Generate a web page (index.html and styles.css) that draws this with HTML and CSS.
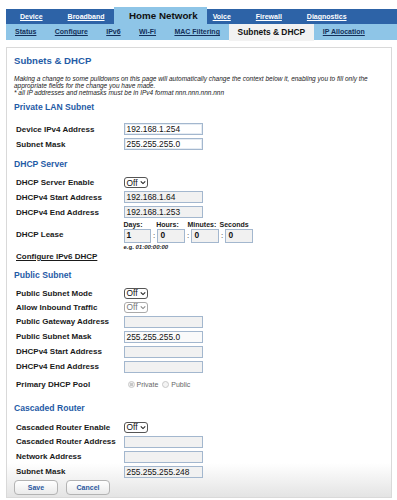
FILE: index.html
```html
<!DOCTYPE html>
<html>
<head>
<meta charset="utf-8">
<link rel="stylesheet" href="styles.css">
</head>
<body>
<nav class="topnav">
  <a class="tab">Device</a>
  <a class="tab">Broadband</a>
  <span class="tab active">Home Network</span>
  <a class="tab">Voice</a>
  <a class="tab">Firewall</a>
  <a class="tab">Diagnostics</a>
</nav>
<nav class="subnav">
  <a class="sub">Status</a>
  <a class="sub">Configure</a>
  <a class="sub">IPv6</a>
  <a class="sub">Wi-Fi</a>
  <a class="sub">MAC Filtering</a>
  <span class="sub active">Subnets &amp; DHCP</span>
  <a class="sub">IP Allocation</a>
</nav>
<main class="box">
  <h1 class="title">Subnets &amp; DHCP</h1>
  <p class="desc">Making a change to some pulldowns on this page will automatically change the context below it, enabling you to fill only the appropriate fields for the change you have made.<br>* all IP addresses and netmasks must be in IPv4 format nnn.nnn.nnn.nnn</p>

  <h2 class="sec sec-lan">Private LAN Subnet</h2>
  <div class="rows rows-lan">
    <div class="row"><span class="lbl">Device IPv4 Address</span><span class="inp">192.168.1.254</span></div>
    <div class="row"><span class="lbl">Subnet Mask</span><span class="inp">255.255.255.0</span></div>
  </div>

  <h2 class="sec sec-dhcp">DHCP Server</h2>
  <div class="rows rows-dhcp">
    <div class="row srow"><span class="lbl">DHCP Server Enable</span><span class="sel">Off<svg viewBox="0 0 8 6" class="chev"><path d="M1 1.5 L4 4.5 L7 1.5" /></svg></span></div>
    <div class="row"><span class="lbl">DHCPv4 Start Address</span><span class="inp grey">192.168.1.64</span></div>
    <div class="row"><span class="lbl">DHCPv4 End Address</span><span class="inp grey">192.168.1.253</span></div>
  </div>
  <div class="lease">
    <span class="lbl">DHCP Lease</span>
    <div class="lease-body">
      <div class="caps">
        <span class="cap c1">Days:</span><span class="cap c2">Hours:</span><span class="cap c3">Minutes:</span><span class="cap">Seconds</span>
      </div>
      <div class="lease-inputs">
        <span class="inp grey small">1</span><span class="colon">:</span><span class="inp grey small">0</span><span class="colon">:</span><span class="inp grey small">0</span><span class="colon">:</span><span class="inp grey small">0</span>
      </div>
      <span class="eg">e.g. <i>01:00:00:00</i></span>
    </div>
  </div>
  <a class="link">Configure IPv6 DHCP</a>

  <h2 class="sec sec-pub">Public Subnet</h2>
  <div class="rows rows-pub">
    <div class="row srow"><span class="lbl">Public Subnet Mode</span><span class="sel">Off<svg viewBox="0 0 8 6" class="chev"><path d="M1 1.5 L4 4.5 L7 1.5" /></svg></span></div>
    <div class="row srow"><span class="lbl">Allow Inbound Traffic</span><span class="sel disabled">Off<svg viewBox="0 0 8 6" class="chev"><path d="M1 1.5 L4 4.5 L7 1.5" /></svg></span></div>
    <div class="row"><span class="lbl">Public Gateway Address</span><span class="inp grey"></span></div>
    <div class="row"><span class="lbl">Public Subnet Mask</span><span class="inp light">255.255.255.0</span></div>
    <div class="row"><span class="lbl">DHCPv4 Start Address</span><span class="inp grey"></span></div>
    <div class="row"><span class="lbl">DHCPv4 End Address</span><span class="inp grey"></span></div>
    <div class="row pool"><span class="lbl">Primary DHCP Pool</span><span class="radios"><span class="radio checked"></span><span class="rtxt">Private</span><span class="radio"></span><span class="rtxt">Public</span></span></div>
  </div>

  <h2 class="sec sec-cas">Cascaded Router</h2>
  <div class="rows rows-cas">
    <div class="row srow"><span class="lbl">Cascaded Router Enable</span><span class="sel">Off<svg viewBox="0 0 8 6" class="chev"><path d="M1 1.5 L4 4.5 L7 1.5" /></svg></span></div>
    <div class="row"><span class="lbl">Cascaded Router Address</span><span class="inp grey"></span></div>
    <div class="row"><span class="lbl">Network Address</span><span class="inp grey"></span></div>
    <div class="row"><span class="lbl">Subnet Mask</span><span class="inp grey">255.255.255.248</span></div>
  </div>
  <div class="buttons">
    <button class="btn">Save</button>
    <button class="btn">Cancel</button>
  </div>
</main>
</body>
</html>
```

FILE: styles.css
```css
* { box-sizing: border-box; }
html, body { margin: 0; padding: 0; background: #fff; }
body {
  font-family: "Liberation Sans", Arial, sans-serif;
  color: #1a1a1a;
  width: 397px;
  overflow: hidden;
}

/* top navigation */
.topnav {
  display: flex;
  align-items: flex-end;
  margin: 7px 0 0 6px;
  height: 17px;
  background: linear-gradient(to bottom, transparent 2px, #2d63a7 2px);
}
.tab {
  height: 15px;
  line-height: 15px;
  padding: 0 12.5px;
  color: #fff;
  font-size: 7px;
  font-weight: bold;
  text-decoration: underline;
}
.tab:first-child { padding-left: 14px; }
.tab.active {
  height: 17px;
  line-height: 18px;
  padding: 0 9px 0 15px;
  margin: 0 0 0 -3px;
  background: #8ec5e7;
  color: #111;
  font-size: 9.8px;
  text-decoration: none;
}
.tab.active + .tab { padding-left: 6px; }

/* sub navigation */
.subnav {
  display: flex;
  align-items: flex-start;
  margin-left: 6px;
  height: 16px;
  background: #8ec5e7;
}
.sub {
  height: 16px;
  line-height: 16px;
  padding: 0 9.2px;
  color: #14305a;
  font-size: 7px;
  font-weight: bold;
  text-decoration: underline;
}
.sub:first-child { padding-left: 9px; }
.sub.active {
  height: 17px;
  line-height: 17px;
  padding: 0 8.5px;
  background: #f2f2f2;
  color: #111;
  font-size: 8.4px;
  text-decoration: none;
}

/* content box */
.box {
  margin: 7px 5px 0 6px;
  height: 451px;
  border: 1px solid #d9d9d9;
  padding: 6px 0 0 7px;
  background: linear-gradient(to bottom, #fff 415px, #e2e2e2 451px);
}
.title {
  margin: 0;
  font-size: 9.6px;
  line-height: 14px;
  color: #1f5ba6;
}
.desc {
  margin: 7px 0 0 0;
  font-size: 6.5px;
  line-height: 7px;
  font-style: italic;
  color: #222;
  max-width: 372px;
}
.sec {
  margin: 4.9px 0 0 0;
  font-size: 8.6px;
  line-height: 12px;
  color: #1f5ba6;
}
.sec-dhcp { margin-top: 6.8px; }
.sec-pub { margin-top: 8.3px; }
.sec-cas { margin-top: 7px; }

.rows { display: flex; flex-direction: column; padding-left: 2px; }
.rows-lan { margin-top: 8.8px; }
.rows-dhcp { margin-top: 5.4px; }
.rows-pub { margin-top: 5.3px; }
.rows-cas { margin-top: 6px; }
.row {
  display: flex;
  align-items: center;
  height: 15px;
}
.row.srow { height: 14px; }
.row.pool { height: 21px; }
.lbl {
  width: 107.5px;
  flex: none;
  font-size: 8px;
  font-weight: bold;
  color: #1a1a1a;
}
.inp {
  display: block;
  flex: none;
  width: 79px;
  height: 12px;
  border: 1px solid #a3b7ce;
  box-shadow: inset 0 0 0 1px #e6ecf3;
  background: #fff;
  font-size: 8.4px;
  line-height: 10px;
  padding-left: 2px;
  color: #111;
}
.inp.grey { background: #f1f1f1; box-shadow: none; }
.inp.light { background: #fafafa; box-shadow: none; }
.inp.small { width: 27.4px; height: 13.4px; line-height: 11.4px; }

.sel {
  display: inline-flex;
  align-items: center;
  gap: 2px;
  width: 24.4px;
  height: 11px;
  border: 1px solid #555;
  border-radius: 3px;
  background: #fff;
  font-size: 8.4px;
  padding-left: 2px;
  color: #111;
}
.sel .chev { width: 6px; height: 5px; fill: none; stroke: #222; stroke-width: 1.4; }
.sel.disabled { border-color: #aaa; color: #777; }
.sel.disabled .chev { stroke: #888; }

.radios { display: flex; align-items: center; margin-left: 4px; font-size: 7px; color: #666; }
.radio {
  width: 7px; height: 7px; border-radius: 50%;
  border: 1px solid #c8c8c8; background: #f4f4f4;
  margin-right: 2px;
}
.radio.checked { background: radial-gradient(circle, #c8c8c8 1.6px, #f0f0f0 2px); }
.rtxt { margin-right: 4px; }

/* lease */
.lease {
  display: flex;
  align-items: flex-start;
  padding-left: 2px;
  margin-top: 1.3px;
}
.lease > .lbl { margin-top: 10px; line-height: 8px; }
.lease-body { display: flex; flex-direction: column; font-size: 7px; font-weight: bold; }
.caps { display: flex; height: 8px; line-height: 8px; }
.cap { white-space: nowrap; }
.cap.c1 { width: 32.7px; }
.cap.c2 { width: 31.3px; }
.cap.c3 { width: 32px; }
.lease-inputs { display: flex; align-items: center; }
.colon { width: 6.6px; text-align: center; font-size: 8px; font-weight: normal; }
.eg { font-size: 6px; line-height: 8px; }

.link {
  display: block;
  margin-top: 2px;
  padding-left: 2px;
  font-size: 8px;
  line-height: 8px;
  font-weight: bold;
  text-decoration: underline;
  color: #1a1a1a;
}

/* buttons */
.buttons { display: flex; gap: 8px; margin-top: 0.7px; padding-left: 0; }
.btn {
  width: 44px;
  height: 15px;
  border: 1px solid #b3b3b3;
  border-radius: 4px;
  background: linear-gradient(#fff, #eaeaea);
  color: #2a58a0;
  font-family: "Liberation Sans", Arial, sans-serif;
  font-size: 7px;
  font-weight: bold;
  padding: 0;
}
```
